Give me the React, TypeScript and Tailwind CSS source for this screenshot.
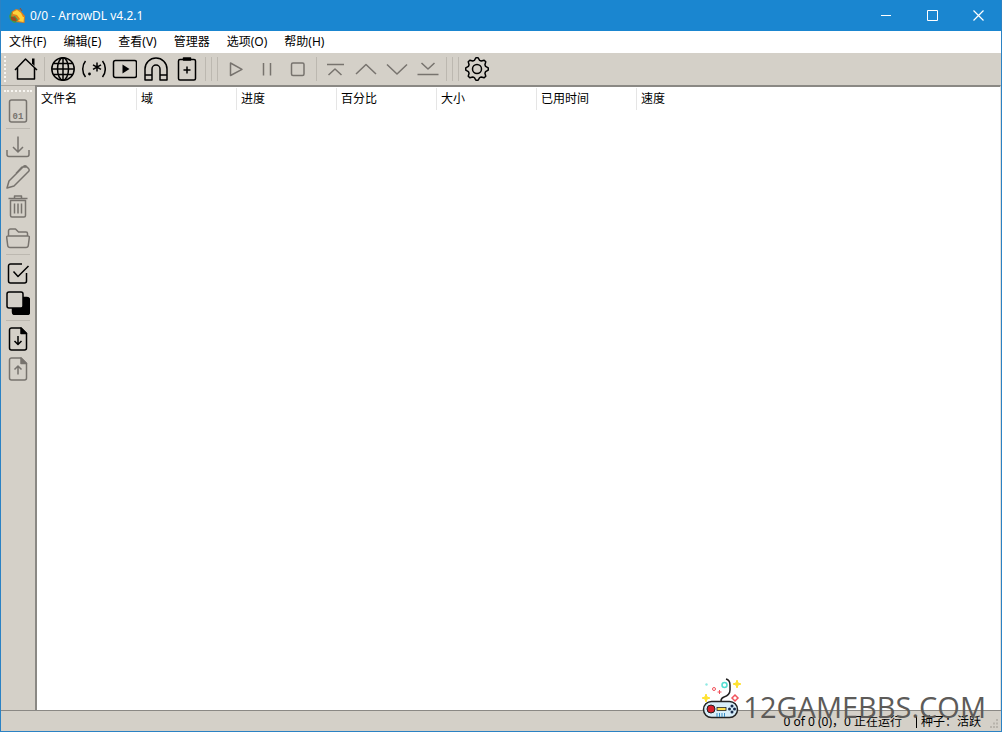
import type { ReactNode } from "react";
import clsx from "clsx";

const menus = ["文件(F)", "编辑(E)", "查看(V)", "管理器", "选项(O)", "帮助(H)"];
const columns = ["文件名", "域", "进度", "百分比", "大小", "已用时间"];

const gearPoints = Array.from({ length: 32 }, (_, i) => {
    const radius = i % 4 < 2 ? 11.3 : 9;
    const angle = ((i - 0.5) * Math.PI) / 16;
    return `${(13 + radius * Math.cos(angle)).toFixed(2)},${(13 + radius * Math.sin(angle)).toFixed(2)}`;
}).join(" ");

type Tool = { label: string; icon: ReactNode; disabled?: boolean };

const addTools: Tool[] = [
    {
        label: "网页内容",
        icon: (
            <>
                <circle cx="13" cy="13" r="11.2" />
                <ellipse cx="13" cy="13" rx="5.5" ry="11.2" />
                <path d="M13 2v22M2 13h22M3.5 7.5h19M3.5 18.5h19" />
            </>
        ),
    },
    {
        label: "批量下载",
        icon: (
            <>
                <path d="M4.5 5C.8 9.5.8 16.5 4.5 21M21.5 5c3.7 4.5 3.7 11.5 0 16" />
                <path d="M16 6.5v9M12 8.8l8 4.5M20 8.8l-8 4.5" />
                <circle cx="8.5" cy="18" r="1.4" fill="currentColor" stroke="none" />
            </>
        ),
    },
    {
        label: "视频流",
        icon: (
            <>
                <rect x="1.5" y="4.5" width="23" height="17" rx="2" />
                <path d="M10.5 8.5v9l7-4.5z" fill="currentColor" stroke="none" />
            </>
        ),
    },
    {
        label: "磁力链接",
        icon: <path d="M2 24V13a11 11 0 0 1 22 0v11h-7V13a4 4 0 0 0-8 0v11zM2 19h7M17 19h7" />,
    },
    {
        label: "粘贴链接",
        icon: (
            <>
                <rect x="4.5" y="3.5" width="17" height="20.5" rx="1.5" />
                <path d="M9.5 4V2h7v2z" fill="currentColor" />
                <path d="M13 10.5v7M9.5 14h7" />
            </>
        ),
    },
];

const runTools: Tool[] = [
    { label: "开始", disabled: true, icon: <path d="M7.5 7v12.5L19 13.3z" /> },
    { label: "暂停", disabled: true, icon: <path d="M9.5 7v12.5M16.5 7v12.5" /> },
    { label: "停止", disabled: true, icon: <rect x="6.5" y="7" width="12.5" height="12.5" rx="1.5" /> },
];

const orderTools: Tool[] = [
    { label: "置顶", disabled: true, icon: <path d="M5 8.5h17M6.5 19l6.5-6 6.5 6" /> },
    { label: "上移", disabled: true, icon: <path d="M3 18l10-9.5L23 18" /> },
    { label: "下移", disabled: true, icon: <path d="M3 8.5L13 18l10-9.5" /> },
    { label: "置底", disabled: true, icon: <path d="M6.5 7l6.5 6 6.5-6M2.5 18.5h21" /> },
];

const fileTools: Tool[] = [
    {
        label: "下载",
        disabled: true,
        icon: <path d="M12 1.5V17M7 12l5 5 5-5M1 15v4.5a2 2 0 0 0 2 2h18a2 2 0 0 0 2-2V15" />,
    },
    {
        label: "重命名",
        disabled: true,
        icon: <path d="M1 23l2-7L17.5 1.5a2 2 0 0 1 3 0l2 2a2 2 0 0 1 0 3L8 21zM10 8.5l5.5-6q1-1 2.5-.5h2.5" />,
    },
    {
        label: "删除",
        disabled: true,
        icon: <path d="M2.5 3.5h19M8.5 3.5V1h7v2.5M4.5 5.5v15A1.5 1.5 0 0 0 6 22h12a1.5 1.5 0 0 0 1.5-1.5v-15zM8.5 8.5v10M12 8.5v10M15.5 8.5v10" />,
    },
    {
        label: "打开目录",
        disabled: true,
        icon: (
            <path d="M2.5 11V6a2 2 0 0 1 2-2h5l3 3H20a1.5 1.5 0 0 1 1.5 1.5V11M2 11h20q1.5 0 1.3 1.5l-1 8q-.3 2-2.3 2H4q-2 0-2.3-2l-1-8Q.5 11 2 11z" />
        ),
    },
];

const selectTools: Tool[] = [
    { label: "全选", icon: <path d="M16 3H4.5a2 2 0 0 0-2 2v15a2 2 0 0 0 2 2h14a2 2 0 0 0 2-2v-8M7.5 10.5l4.5 5L22.5 5" /> },
    {
        label: "反选",
        icon: (
            <>
                <rect x="6.5" y="6.5" width="17" height="17" rx="2.5" fill="currentColor" />
                <rect x="1" y="1" width="16" height="16" rx="2" fill="#d4d0c8" />
            </>
        ),
    },
];

const sheet = (
    <>
        <path d="M15 1H5.5a2 2 0 0 0-2 2v18a2 2 0 0 0 2 2h13a2 2 0 0 0 2-2V6.5z" />
        <path d="M15 1v5.5h5.5z" fill="currentColor" />
    </>
);

const listTools: Tool[] = [
    { label: "导入", icon: <>{sheet}<path d="M12 9v8.5M8.5 14l3.5 3.5 3.5-3.5" /></> },
    { label: "导出", disabled: true, icon: <>{sheet}<path d="M12 17.5V9M8.5 12.5L12 9l3.5 3.5" /></> },
];

function TopButton({ label, icon, disabled }: Tool) {
    return (
        <button
            aria-label={label}
            disabled={disabled}
            className={clsx("flex h-[31px] w-[31px] items-center justify-center", disabled ? "text-[#77736e]" : "text-black")}
        >
            <svg width="25" height="25" viewBox="0 0 25 25" fill="none" stroke="currentColor" strokeWidth="1.5" strokeLinejoin="round">
                {icon}
            </svg>
        </button>
    );
}

function SideButton({ label, icon, disabled }: Tool) {
    return (
        <button
            aria-label={label}
            disabled={disabled}
            className={clsx("flex h-[30px] w-full items-center justify-center", disabled ? "text-[#77736e]" : "text-black")}
        >
            <svg width="24" height="24" viewBox="0 0 24 24" fill="none" stroke="currentColor" strokeWidth="1.5" strokeLinejoin="round">
                {icon}
            </svg>
        </button>
    );
}

function TopDivider() {
    return (
        <div className="w-1.5 pt-1 pl-[3px]">
            <div className="h-6 border-l border-[#bcb8b0]" />
        </div>
    );
}

function TopGroupDivider() {
    return (
        <div className="flex">
            <TopDivider />
            <TopDivider />
            <TopDivider />
        </div>
    );
}

function SideDivider() {
    return (
        <div className="h-1.5 px-[5px] pt-0.5">
            <div className="border-t border-[#bcb8b0]" />
        </div>
    );
}

function AppLogo() {
    return (
        <svg width="16" height="16" viewBox="0 0 16 16">
            <path d="M0 8l2-4 4-1 2 3 1 8-4 1-4-3z" fill="#3d9b52" />
            <path d="M3 3.5L7 1l4 1 4 5 1 1-.5 7-8.5-1 2-2-3-4-4 1z" fill="#e0801c" />
            <path d="M4 4l4-2 4 3 2 4h1l-.5 5-5.5-1 2-2-3-4-4-1z" fill="#ffd43c" />
            <path d="M2 9l4 1 1 3-4-1zM11 0l2 3" fill="#a4491d" stroke="#a4491d" />
        </svg>
    );
}

function Gamepad() {
    return (
        <svg width="42" height="44" viewBox="0 0 42 44" fill="none">
            <path d="M20 24q0-3 3-4 6-2 6-7V8q0-5-4-6" stroke="#222" strokeWidth="1.5" />
            <rect x="2.5" y="24.5" width="34" height="16" rx="8" fill="#d8eef9" stroke="#222" strokeWidth="1.5" />
            <circle cx="10" cy="32" r="4" fill="#d9202b" stroke="#222" />
            <rect x="16" y="30.5" width="9" height="3" fill="#ffe14d" stroke="#222" strokeWidth=".8" />
            <path d="M16 36v4M18.5 36v4M21 36v4M23.5 36v4" stroke="#398fc4" />
            <g fill="#192c4d">
                <circle cx="31" cy="29" r="1.5" />
                <circle cx="28.5" cy="32" r="1.5" />
                <circle cx="33.5" cy="32" r="1.5" />
                <circle cx="31" cy="35" r="1.5" />
            </g>
            <path d="M36 3l1 3 3 1-3 1-1 3-1-3-3-1 3-1zM5 17l1 3 3 1-3 1-1 3-1-3-3-1 3-1z" fill="#ffe22e" stroke="#ffe22e" />
            <circle cx="23.5" cy="8" r="2.5" stroke="#52ded2" strokeWidth="1.5" />
            <circle cx="5.5" cy="7.5" r="1.2" fill="#8fe9e4" />
            <circle cx="13" cy="12" r="1.5" stroke="#f1535c" />
            <path d="M18.5 13v4M16.5 15h4" stroke="#f1535c" />
            <path d="M34 18l3 3-3 3-3-3z" stroke="#f1535c" strokeWidth="1.5" />
        </svg>
    );
}

export default function App() {
    return (
        <div className="relative flex min-h-screen flex-col border-x border-b border-[#2b82c4] bg-[#d4d0c8] font-['Noto_Sans','Noto_Sans_CJK_SC',sans-serif] text-xs text-black">
            <header className="flex h-[31px] items-center bg-[#1a86d0] text-white">
                <div className="flex flex-1 items-center gap-[5px] pl-2">
                    <AppLogo />
                    <h1>0/0 - ArrowDL v4.2.1</h1>
                </div>
                <button aria-label="最小化" className="flex h-full w-[46px] items-center justify-center">
                    <svg width="10" height="10" stroke="currentColor"><path d="M0 4.5h10" /></svg>
                </button>
                <button aria-label="最大化" className="flex h-full w-[46px] items-center justify-center">
                    <svg width="11" height="11" fill="none" stroke="currentColor"><path d="M.5.5h10v10H.5z" /></svg>
                </button>
                <button aria-label="关闭" className="flex h-full w-[46px] items-center justify-center">
                    <svg width="11" height="11" stroke="currentColor" strokeWidth="1.2"><path d="M.5.5l10 10M10.5.5l-10 10" /></svg>
                </button>
            </header>

            <nav className="flex h-[22px] items-center gap-px bg-white">
                {menus.map((menu) => (
                    <button key={menu} className="px-2">{menu}</button>
                ))}
            </nav>

            <div role="toolbar" aria-label="工具栏" className="flex h-8 items-start pl-[3px]">
                <span className="mt-[3px] mr-1 h-[26px] border-l-2 border-dotted border-[#f8f6f2]" />
                <TopButton
                    label="主页"
                    icon={
                        <>
                            <path d="M2 14L12.5 3 24 14M4.5 12v11h17V12" />
                            <path d="M19 2.5h2.5V10L19 7.5z" fill="currentColor" stroke="none" />
                        </>
                    }
                />
                <TopDivider />
                {addTools.map((tool) => <TopButton key={tool.label} {...tool} />)}
                <TopGroupDivider />
                {runTools.map((tool) => <TopButton key={tool.label} {...tool} />)}
                <TopDivider />
                {orderTools.map((tool) => <TopButton key={tool.label} {...tool} />)}
                <TopGroupDivider />
                <TopButton
                    label="设置"
                    icon={
                        <>
                            <polygon points={gearPoints} />
                            <circle cx="13" cy="13" r="4.5" />
                        </>
                    }
                />
            </div>

            <div className="flex flex-1">
                <div role="toolbar" aria-label="下载操作" className="w-[34px] border-t border-[#aaa69e]">
                    <div className="flex h-[10px] items-center px-[3px]">
                        <span className="w-full border-t-2 border-dotted border-[#f8f6f2]" />
                    </div>
                    <SideButton
                        label="文件信息"
                        disabled
                        icon={
                            <>
                                <rect x="3.5" y="1" width="17" height="22" rx="2" />
                                <text x="12" y="19.5" textAnchor="middle" fill="currentColor" stroke="none" className="font-['Liberation_Mono',monospace] text-[9px] font-bold">01</text>
                            </>
                        }
                    />
                    <SideDivider />
                    {fileTools.map((tool) => <SideButton key={tool.label} {...tool} />)}
                    <SideDivider />
                    {selectTools.map((tool) => <SideButton key={tool.label} {...tool} />)}
                    <SideDivider />
                    {listTools.map((tool) => <SideButton key={tool.label} {...tool} />)}
                </div>

                <main className="flex-1 border-t-2 border-r border-l-2 border-[#8a8884] border-r-[#e3e1dc] bg-white pt-px">
                    <table className="w-full table-fixed border-separate border-spacing-0">
                        <thead>
                            <tr className="h-[22px] text-left">
                                {columns.map((column) => (
                                    <th key={column} className="w-[100px] border-r border-[#e5e5e5] px-1 font-normal">{column}</th>
                                ))}
                                <th className="px-1 font-normal">速度</th>
                            </tr>
                        </thead>
                    </table>
                </main>
            </div>

            <footer className="flex h-[21px] items-center justify-end gap-3.5 border-t border-[#8a8884] pt-0.5 pr-5">
                <span>0 of 0 (0)，0 正在运行</span>
                <span className="flex items-center gap-1">
                    <span className="h-3 border-l border-black" />
                    种子：活跃
                </span>
                <svg className="absolute right-0.5 bottom-0.5" width="10" height="10" fill="#b8b4ac">
                    <path d="M7 0h2v2H7zM4 3.5h2v2H4zM7 3.5h2v2H7zM1 7h2v2H1zM4 7h2v2H4zM7 7h2v2H7z" />
                </svg>
            </footer>

            {/* Site mark floating over the list and status bar */}
            <div className="pointer-events-none absolute right-[15px] bottom-2 flex items-end font-['Open_Sans',sans-serif] text-[29px] leading-8 text-[#5d5b59]">
                <div className="pb-0.5"><Gamepad /></div>
                <span>12GAMEBBS.COM</span>
            </div>
        </div>
    );
}
